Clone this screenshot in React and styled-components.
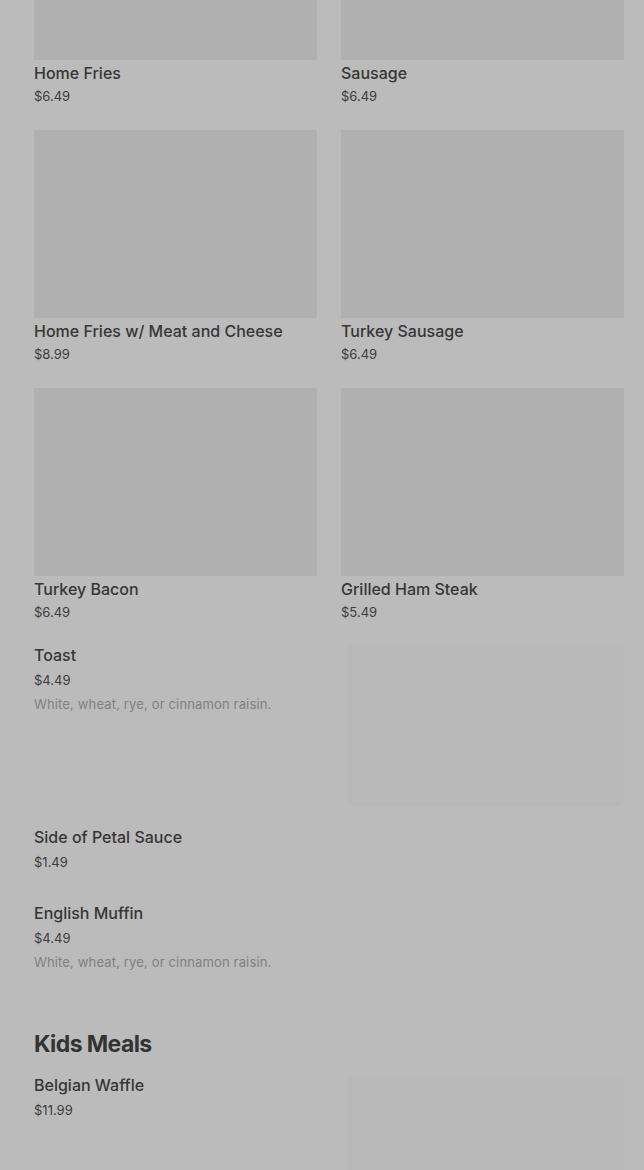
import React from "react";
import styled, { createGlobalStyle } from "styled-components";

const GlobalStyle = createGlobalStyle`
  html, body {
    margin: 0;
    padding: 0;
    background: #bbbbbb;
  }
  body {
    font-family: Inter, "Noto Sans", sans-serif;
    color: #333333;
  }
`;

const gridItems = [
  { name: "Home Fries", price: "$6.49" },
  { name: "Sausage", price: "$6.49" },
  { name: "Home Fries w/ Meat and Cheese", price: "$8.99" },
  { name: "Turkey Sausage", price: "$6.49" },
  { name: "Turkey Bacon", price: "$6.49" },
  { name: "Grilled Ham Steak", price: "$5.49" },
];

const DESC = "White, wheat, rye, or cinnamon raisin.";

const App = () => {
  return (
    <>
      <GlobalStyle />
      <Page>
        <Grid>
          {gridItems.map((item) => (
            <Card key={item.name}>
              <CardImage />
              <Title>{item.name}</Title>
              <Price>{item.price}</Price>
            </Card>
          ))}
        </Grid>

        <List>
          <ListItem>
            <ItemText>
              <Title>Toast</Title>
              <Price>$4.49</Price>
              <Desc>{DESC}</Desc>
            </ItemText>
            <Thumb />
          </ListItem>
          <ListItem>
            <ItemText>
              <Title>Side of Petal Sauce</Title>
              <Price>$1.49</Price>
            </ItemText>
          </ListItem>
          <ListItem>
            <ItemText>
              <Title>English Muffin</Title>
              <Price>$4.49</Price>
              <Desc>{DESC}</Desc>
            </ItemText>
          </ListItem>
        </List>

        <SectionTitle>Kids Meals</SectionTitle>
        <List $top={0}>
          <ListItem>
            <ItemText>
              <Title>Belgian Waffle</Title>
              <Price>$11.99</Price>
            </ItemText>
            <Thumb $offset={2} />
          </ListItem>
        </List>
      </Page>
    </>
  );
};

const Page = styled.main`
  margin-top: -128px;
  padding: 0 20px 40px 34px;
`;

const Grid = styled.section`
  display: grid;
  grid-template-columns: 1fr 1fr;
  column-gap: 24px;
  row-gap: 24px;
`;

const Title = styled.h3`
  margin: 0;
  font-size: 16px;
  line-height: 24px;
  font-weight: 500;
  color: #363636;
  white-space: nowrap;
`;

const Price = styled.div`
  font-size: 13px;
  line-height: 20px;
  color: #3d3d3d;
`;

const Card = styled.article`
  display: flex;
  flex-direction: column;

  ${Price} {
    margin-top: 1px;
  }
`;

const CardImage = styled.div`
  height: 188px;
  background: #b0b0b0;
  margin-bottom: 1px;
`;

const Desc = styled.p`
  margin: 4px 0 0;
  font-size: 13px;
  line-height: 20px;
  letter-spacing: 0.15px;
  color: #808080;
`;

const List = styled.section`
  display: flex;
  flex-direction: column;
  gap: 22px;
  margin-top: ${(p) => (p.$top ?? 21)}px;
`;

const ListItem = styled.div`
  display: flex;
  align-items: flex-start;
  justify-content: space-between;
  gap: 24px;

  ${Price} {
    margin-top: 3px;
  }
`;

const ItemText = styled.div`
  display: flex;
  flex-direction: column;
  padding-bottom: 7px;
`;

const Thumb = styled.div`
  flex: 0 0 272px;
  height: 160px;
  margin-top: ${(p) => p.$offset || 0}px;
  background: #b9b9b9;
  box-shadow: -3px 3px 3px rgba(0, 0, 0, 0.025);
`;

const SectionTitle = styled.h2`
  margin: 49px 0 13px;
  font-size: 23px;
  line-height: 32px;
  font-weight: 700;
  letter-spacing: -0.6px;
  color: #333333;
`;

export default App;
